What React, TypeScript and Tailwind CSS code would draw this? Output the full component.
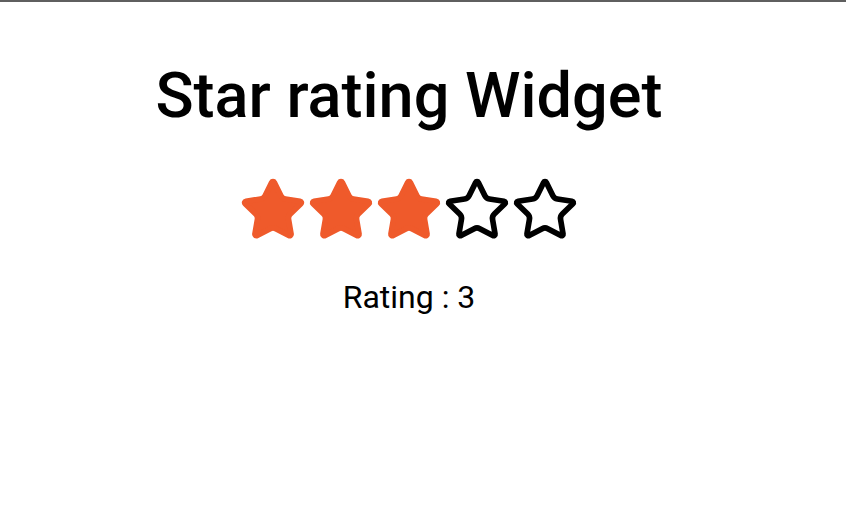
import React, { useState } from 'react';
import { Star } from 'lucide-react';

export default function App() {
  const [rating, setRating] = useState(3);

  return (
    <div className="min-h-screen bg-white text-black border-t-2 border-[#5f5f5f]" style={{ fontFamily: 'Roboto, sans-serif' }}>
      <div className="w-[818px] flex flex-col items-center pt-[58px]">
        {/* Title */}
        <h1 className="text-[63px] leading-[72px] font-medium">Star rating Widget</h1>

        {/* Stars */}
        <div className="flex mt-[44px]">
          {[1, 2, 3, 4, 5].map((n) => (
            <button key={n} onClick={() => setRating(n)} className="cursor-pointer">
              <Star
                size={68}
                strokeWidth={2}
                color={n <= rating ? '#ef5a2b' : '#000000'}
                fill={n <= rating ? '#ef5a2b' : 'none'}
              />
            </button>
          ))}
        </div>

        {/* Rating value */}
        <p className="text-[32px] leading-[38px] mt-[34px]">Rating : {rating}</p>
      </div>
    </div>
  );
}
